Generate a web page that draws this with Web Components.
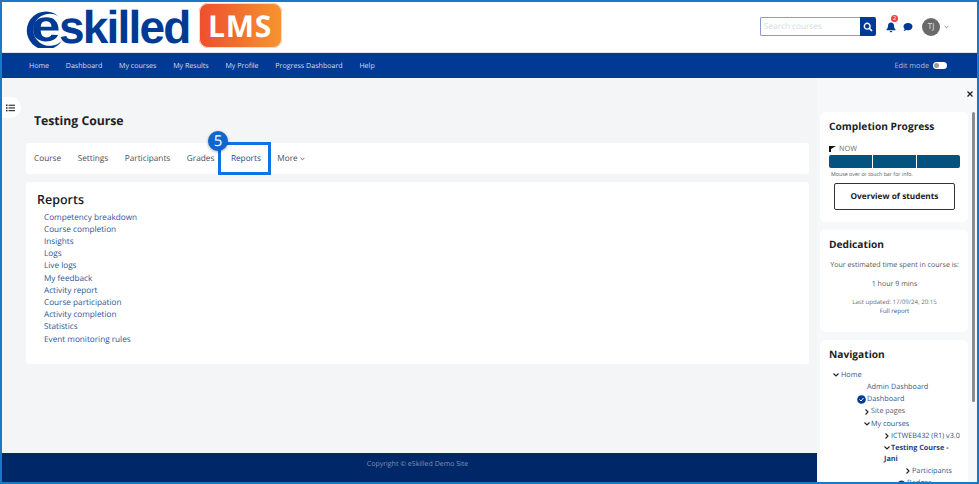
<!DOCTYPE html>
<html><head><meta charset="utf-8"><style>
html,body{margin:0;padding:0;background:#fff}
body{font-family:"Open Sans",sans-serif;text-rendering:geometricPrecision}
</style></head><body>
<x-app>
  <x-header slot="header"></x-header>
  <x-nav slot="nav">
    <a>Home</a><a>Dashboard</a><a>My courses</a><a>My Results</a><a>My Profile</a><a>Progress Dashboard</a><a>Help</a>
  </x-nav>
  <x-main slot="main"></x-main>
  <x-drawer slot="drawer"></x-drawer>
  <x-footer slot="footer">Copyright © eSkilled Demo Site</x-footer>
</x-app>
<script>
function def(name,html){
  customElements.define(name,class extends HTMLElement{
    constructor(){super();const t=document.createElement('template');t.innerHTML=html;this.attachShadow({mode:'open'}).appendChild(t.content.cloneNode(true));}
  });
}
const chev='<svg width="7" height="5" viewBox="0 0 7 5"><path d="M.8 1l2.700 2.700L6.200 1" fill="none" stroke="currentColor" stroke-width="1.100"/></svg>';
def('x-app',`<style>
:host{display:block;width:979px;height:484px;box-sizing:border-box;border:2px solid #1a78c8;overflow:hidden;background:#f4f5f7;position:relative}
.body{display:flex;height:404px;align-items:stretch}
.left{flex:0 0 815px;display:flex;flex-direction:column;min-width:0}
.mid{flex:1}
.foot{height:29px}
.dr{flex:0 0 160px;height:404px;overflow:hidden}
</style>
<slot name="header"></slot><slot name="nav"></slot>
<div class="body"><div class="left"><div class="mid"><slot name="main"></slot></div><div class="foot"><slot name="footer"></slot></div></div><div class="dr"><slot name="drawer"></slot></div></div>`);
def('x-header',`<style>
:host{display:flex;height:51px;background:#fff;align-items:center;box-sizing:border-box;padding:0 0 0 23px;border-bottom:1px solid #dfe3ea}
.logo{display:flex;align-items:center;height:48px;color:#003a94;font-family:"Liberation Sans",sans-serif;font-weight:700}
.mark{position:relative;width:37px;height:38px;flex:none;margin-top:4px}
.mark svg{position:absolute;left:0;top:0}
.mark b{position:absolute;left:6px;top:-7px;font:700 44px/48px "Liberation Sans",sans-serif;color:#003a94;transform:scaleX(1.2);transform-origin:0 50%}
.word{font-size:46px;letter-spacing:-1.800px;line-height:48px;margin-left:-3px;margin-top:-1px}
.lms{margin-left:9px;width:83px;height:45px;border-radius:9px;background:linear-gradient(90deg,#ee4e2d,#f7952f);color:#fff;font:700 30px/45px "Open Sans",sans-serif;text-align:center;letter-spacing:.8px;box-shadow:0 0 0 1px #fbd9c6 inset;margin-top:-4px}
.sp{flex:1}
.search{display:flex;width:116px;height:19px;margin-right:10px;margin-top:-1px}
.inp{flex:1;border:1px solid #7f9fd6;border-right:0;border-radius:2px 0 0 2px;font-size:8.200px;line-height:17px;color:#d5d9df;padding-left:3px;box-sizing:border-box}
.btn{width:16px;background:#003a94;border-radius:0 2px 2px 0;display:flex;align-items:center;justify-content:center}
.bell{position:relative;width:10px;height:12px;margin-right:7px;color:#003a94;display:flex}
.badge{position:absolute;left:5px;top:-6px;width:7px;height:7px;border-radius:50%;background:#f0403c;color:#fff;font-size:5.500px;line-height:7px;text-align:center}
.chat{width:10px;height:10px;margin-right:9px;display:flex}
.av{width:18px;height:18px;border-radius:50%;background:#6a6a6a;color:#e8e8e8;font-size:8px;line-height:18px;text-align:center;margin-right:4px}
.c{color:#5b78b4;width:5px;margin-right:28px;display:flex}
</style>
<div class="logo">
  <div class="mark"><svg width="38" height="38" viewBox="0 0 38 38"><path d="M33 6A19 19 0 1 0 37 30.500A16.500 16 0 1 1 33 6z" fill="#003a94"/></svg><b>e</b></div>
  <span class="word">skilled</span>
</div>
<div class="lms">LMS</div>
<div class="sp"></div>
<div class="search"><div class="inp">Search courses</div><div class="btn"><svg width="10" height="10" viewBox="0 0 10 10"><circle cx="4.200" cy="4.200" r="2.900" fill="none" stroke="#fff" stroke-width="1.400"/><path d="M6.400 6.400L9 9" stroke="#fff" stroke-width="1.600"/></svg></div></div>
<div class="bell"><svg width="10" height="12" viewBox="0 0 10 12"><path d="M5 1.500c-2 0-3 1.500-3 3.300 0 2-.7 2.800-1.500 3.700v.7h9v-.7C8.700 7.600 8 6.800 8 4.800 8 3 7 1.500 5 1.500zM3.800 10h2.400c0 .8-.5 1.300-1.200 1.300S3.800 10.800 3.800 10z" fill="#003a94"/></svg><span class="badge">2</span></div>
<div class="chat"><svg width="10" height="10" viewBox="0 0 10 10"><path d="M5 1C2.400 1 .5 2.500.5 4.500c0 1 .5 1.800 1.200 2.400-.1.800-.6 1.500-1.200 2 1.100 0 2-.4 2.700-1 .6.200 1.200.3 1.800.3 2.600 0 4.500-1.600 4.500-3.700S7.600 1 5 1z" fill="#003a94"/></svg></div>
<div class="av">TJ</div>
<div class="c">${chev.replace('width="7"','width="5"').replace('height="5"','height="4"')}</div>`);
def('x-nav',`<style>
:host{display:flex;height:25px;background:#003a94;align-items:center;box-sizing:border-box;padding:1px 30px 0 27px;color:#d5def0;font-size:7.100px}
.links{display:flex;flex:1;gap:16.700px}
::slotted(a){color:#d5def0}
.em{color:#a9bbdc;margin-right:4px;font-size:7.300px}
.t{width:14px;height:7px;border-radius:4px;background:#fff;position:relative;margin-top:-1px}
.t i{position:absolute;left:1px;top:1px;width:5px;height:5px;border-radius:50%;background:#9a9a9a}
</style><div class="links"><slot></slot></div><span class="em">Edit mode</span><span class="t"><i></i></span>`);
def('x-main',`<style>
:host{display:block;position:relative;height:375px;box-sizing:border-box;padding:35px 8px 0 24px;color:#1d2125}
.tog{position:absolute;left:-2px;top:19px;width:21px;height:21px;background:#fff;border-radius:0 11px 11px 0;display:flex;align-items:center;justify-content:center}
h1{font-size:12.200px;font-weight:700;line-height:16px;margin:0 0 14px 8px;color:#1d2125}
.tabs{display:flex;background:#fff;border-radius:3px;height:31px;align-items:center;padding:0 0 0 8px;gap:16.500px;font-size:8.250px;color:#4a5058;position:relative}
.tabs span{white-space:nowrap}
.tabs .a{color:#1d4a94}
.more{display:flex;align-items:center;gap:2px}
.mark{position:absolute;left:192px;top:-1px;width:53px;height:33px;box-sizing:border-box;border:3px solid #0f72e5}
.num{position:absolute;left:182px;top:-12px;width:20px;height:20px;border-radius:50%;background:#0f66cf;color:#fff;font:400 15px/20px "Open Sans",sans-serif;text-align:center;box-shadow:0 1px 3px rgba(0,0,0,.35)}
.card{background:#fff;border-radius:3px;margin-top:8px;height:182px;box-sizing:border-box;padding:9px 11px}
h2{font-size:12.500px;font-weight:600;line-height:18px;margin:0 0 2.500px;color:#1d2125}
ul{list-style:none;margin:0;padding:0 0 0 7px;font-size:8.200px;line-height:12.200px;color:#2f5597}
</style>
<div class="tog"><svg width="9" height="8" viewBox="0 0 9 8" fill="#222"><rect x="0" y=".5" width="1.500" height="1.500"/><rect x="0" y="3.200" width="1.500" height="1.500"/><rect x="0" y="5.900" width="1.500" height="1.500"/><rect x="2.600" y=".7" width="6.400" height="1.100"/><rect x="2.600" y="3.400" width="6.400" height="1.100"/><rect x="2.600" y="6.100" width="6.400" height="1.100"/></svg></div>
<h1>Testing Course</h1>
<div class="tabs"><span>Course</span><span>Settings</span><span>Participants</span><span>Grades</span><span class="a">Reports</span><span class="more">More ${chev.replace('width="7"','width="5"').replace('height="5"','height="4"')}</span>
<div class="mark"></div><div class="num">5</div></div>
<div class="card"><h2>Reports</h2><ul><li>Competency breakdown</li><li>Course completion</li><li>Insights</li><li>Logs</li><li>Live logs</li><li>My feedback</li><li>Activity report</li><li>Course participation</li><li>Activity completion</li><li>Statistics</li><li>Event monitoring rules</li></ul></div>`);
def('x-footer',`<style>
:host{display:block;height:29px;background:#002868;color:#7f93b5;font-size:7px;line-height:23px;text-align:center;padding-left:16px}
</style><slot></slot>`);
def('x-block',`<style>
:host{display:block;background:#fff;border-radius:5px;box-sizing:border-box;padding:8px 8px 0 9px;margin-bottom:8px;overflow:hidden}
h3{font-size:10.200px;font-weight:700;line-height:12px;margin:0;color:#1d2125}
.b{display:flow-root;padding-top:2px}
</style><h3><slot name="title"></slot></h3><div class="b"><slot></slot></div>`);
def('x-progress',`<style>
:host{display:block;color:#555}
.now{display:flex;align-items:center;gap:3px;font-size:7.300px;line-height:10px;margin-top:10px;color:#6c7178}
.bar{display:flex;gap:1px;height:13px;margin-top:1px}
.bar i{flex:1;background:#04527f}
.bar i:first-child{border-radius:2px 0 0 2px}.bar i:last-child{border-radius:0 2px 2px 0}
.note{font-size:5.300px;line-height:8px;margin:2px 0 0 2px;color:#555}
.btn{display:block;box-sizing:border-box;width:121px;height:27px;margin:5px 0 0 5px;border:1px solid #333;border-radius:2px;font-size:8.250px;font-weight:700;line-height:25px;text-align:center;color:#1d2125}
</style>
<div class="now"><svg width="7" height="6" viewBox="0 0 7 6"><path d="M0 0h7L2 3v3H0z" fill="#111"/></svg>NOW</div>
<div class="bar"><i></i><i></i><i></i></div>
<div class="note">Mouse over or touch bar for info.</div>
<div class="btn">Overview of students</div>`);
def('x-dedication',`<style>
:host{display:block;text-align:center;color:#555}
p{margin:0;white-space:nowrap}
.a{font-size:7.100px;line-height:12px;padding-top:7px}
.b{font-size:7.100px;line-height:12px;margin-top:7px}
.c{font-size:6.100px;line-height:9px;margin-top:7px;color:#6a6f75}
.d{font-size:6.100px;line-height:9px;color:#2f5597}
</style><p class="a">Your estimated time spent in course is:</p><p class="b">1 hour 9 mins</p><p class="c">Last updated: 17/09/24, 20:15</p><p class="d">Full report</p>`);
const ch=(d)=>`<svg class="i" width="6" height="6" viewBox="0 0 6 6"><path d="${d==='r'?'M1.500.5L4 3 1.500 5.500':'M.5 1.500L3 4l2.500-2.500'}" fill="none" stroke="#222" stroke-width="1.100"/></svg>`;
def('x-tree',`<style>
:host{display:block;font-size:7.250px;line-height:12.150px;color:#2f5597;margin-top:7px}
.r{display:flex;align-items:center;gap:1px;white-space:nowrap}
.i{flex:none}
.g{color:#5c6269}
.bd{font-weight:700;color:#1d3f80}
</style>
<div class="r" style="padding-left:4px;gap:2px">${ch('d')}<span>Home</span></div>
<div class="r" style="padding-left:38px">Admin Dashboard</div>
<div class="r" style="padding-left:28px;gap:1px"><svg width="9" height="9" viewBox="0 0 9 9"><circle cx="4.500" cy="4.500" r="4.300" fill="#003a94"/><path d="M2.500 4.500L4 6l2.500-3" fill="none" stroke="#fff" stroke-width="1"/></svg><span>Dashboard</span></div>
<div class="r" style="padding-left:35px">${ch('r')}<span class="g">Site pages</span></div>
<div class="r" style="padding-left:35px">${ch('d')}<span>My courses</span></div>
<div class="r" style="padding-left:55px;gap:1px">${ch('r')}<span>ICTWEB432 (R1) v3.0</span></div>
<div class="r" style="padding-left:55px;gap:1px">${ch('d')}<span class="bd">Testing Course -</span></div>
<div class="r bd" style="padding-left:55px;margin-top:-1px">Jani</div>
<div class="r" style="padding-left:76px;gap:1px">${ch('r')}<span>Participants</span></div>
<div class="r" style="padding-left:69px;gap:2px"><svg width="7" height="7" viewBox="0 0 7 7"><ellipse cx="3.500" cy="3.500" rx="3.500" ry="3" fill="#003a94"/></svg><span>Badges</span></div>`);
def('x-drawer',`<style>
:host{display:block;position:relative;height:404px;box-sizing:border-box;background:#f7f8f9;box-shadow:-2px 0 4px rgba(0,0,0,.12);padding:0 9px 0 3px;overflow:hidden}
.x{height:34px;position:relative}
.x svg{position:absolute;right:-5px;top:13px}
.sb{position:absolute;left:155px;top:34px;width:3px;height:290px;background:#8a8d90;border-radius:2px}
.h1{height:110px}.h2{height:102px}.h3{height:200px}
x-block{display:block}
</style>
<div class="x"><svg width="6" height="6" viewBox="0 0 6 6"><path d="M.5.5l5 5M5.500.5l-5 5" stroke="#222" stroke-width="1.300"/></svg></div>
<div class="sb"></div>
<x-block class="h1"><span slot="title">Completion Progress</span><x-progress></x-progress></x-block>
<x-block class="h2"><span slot="title">Dedication</span><x-dedication></x-dedication></x-block>
<x-block class="h3"><span slot="title">Navigation</span><x-tree></x-tree></x-block>`);
</script>
</body></html>
